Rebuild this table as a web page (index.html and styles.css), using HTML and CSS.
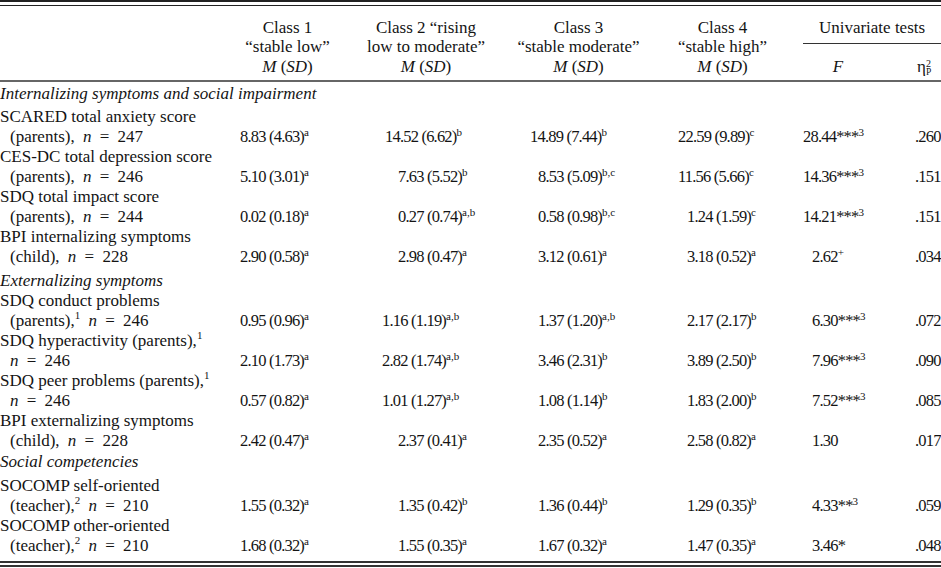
FILE: index.html
```html
<!DOCTYPE html>
<html lang="en">
<head>
<meta charset="utf-8">
<title>Table</title>
<link rel="stylesheet" href="styles.css">
</head>
<body>
<div class="tbl">
<div class="inner">
<table>
  <colgroup>
    <col class="w-lab"><col class="w-c1"><col class="w-c2"><col class="w-c3"><col class="w-c4"><col class="w-f"><col class="w-e">
  </colgroup>
  <thead>
    <tr>
      <th></th>
      <th>Class 1<br>“stable low”<br><i>M</i> (<i>SD</i>)</th>
      <th>Class 2 “rising<br>low to moderate”<br><i>M</i> (<i>SD</i>)</th>
      <th>Class 3<br>“stable moderate”<br><i>M</i> (<i>SD</i>)</th>
      <th>Class 4<br>“stable high”<br><i>M</i> (<i>SD</i>)</th>
      <th colspan="2" class="uv-cell">
        <div class="uv">Univariate tests</div>
        <div class="uv-sub"><span class="hf"><i>F</i></span><span class="he">η<span class="ss"><span class="s2">2</span><span class="p">P</span></span></span></div>
      </th>
    </tr>
  </thead>
  <tbody>
    <tr class="sec s1"><td colspan="7">Internalizing symptoms and social impairment</td></tr>
    <tr>
      <td class="lab"><div>SCARED total anxiety score</div><div class="cont">(parents), <i>n</i> = 247</div></td>
      <td class="num c1">8.83 (4.63)<sup>a</sup></td>
      <td class="num c2 i13">14.52 (6.62)<sup>b</sup></td>
      <td class="num c3 i8">14.89 (7.44)<sup>b</sup></td>
      <td class="num c4 i9">22.59 (9.89)<sup>c</sup></td>
      <td class="num cf i9">28.44***<sup>3</sup></td>
      <td class="num ce">.260</td>
    </tr>
    <tr>
      <td class="lab"><div>CES-DC total depression score</div><div class="cont">(parents), <i>n</i> = 246</div></td>
      <td class="num c1">5.10 (3.01)<sup>a</sup></td>
      <td class="num c2">7.63 (5.52)<sup>b</sup></td>
      <td class="num c3">8.53 (5.09)<sup>b,c</sup></td>
      <td class="num c4 i9">11.56 (5.66)<sup>c</sup></td>
      <td class="num cf i9">14.36***<sup>3</sup></td>
      <td class="num ce">.151</td>
    </tr>
    <tr>
      <td class="lab"><div>SDQ total impact score</div><div class="cont">(parents), <i>n</i> = 244</div></td>
      <td class="num c1">0.02 (0.18)<sup>a</sup></td>
      <td class="num c2">0.27 (0.74)<sup>a,b</sup></td>
      <td class="num c3">0.58 (0.98)<sup>b,c</sup></td>
      <td class="num c4">1.24 (1.59)<sup>c</sup></td>
      <td class="num cf i9">14.21***<sup>3</sup></td>
      <td class="num ce">.151</td>
    </tr>
    <tr>
      <td class="lab"><div>BPI internalizing symptoms</div><div class="cont">(child), <i>n</i> = 228</div></td>
      <td class="num c1">2.90 (0.58)<sup>a</sup></td>
      <td class="num c2">2.98 (0.47)<sup>a</sup></td>
      <td class="num c3">3.12 (0.61)<sup>a</sup></td>
      <td class="num c4">3.18 (0.52)<sup>a</sup></td>
      <td class="num cf">2.62<sup>+</sup></td>
      <td class="num ce">.034</td>
    </tr>
    <tr class="sec s2"><td colspan="7">Externalizing symptoms</td></tr>
    <tr>
      <td class="lab"><div>SDQ conduct problems</div><div class="cont">(parents),<sup>1</sup> <i>n</i> = 246</div></td>
      <td class="num c1">0.95 (0.96)<sup>a</sup></td>
      <td class="num c2 i16">1.16 (1.19)<sup>a,b</sup></td>
      <td class="num c3">1.37 (1.20)<sup>a,b</sup></td>
      <td class="num c4">2.17 (2.17)<sup>b</sup></td>
      <td class="num cf">6.30***<sup>3</sup></td>
      <td class="num ce">.072</td>
    </tr>
    <tr>
      <td class="lab"><div>SDQ hyperactivity (parents),<sup>1</sup></div><div class="cont"><i>n</i> = 246</div></td>
      <td class="num c1">2.10 (1.73)<sup>a</sup></td>
      <td class="num c2 i16">2.82 (1.74)<sup>a,b</sup></td>
      <td class="num c3">3.46 (2.31)<sup>b</sup></td>
      <td class="num c4">3.89 (2.50)<sup>b</sup></td>
      <td class="num cf">7.96***<sup>3</sup></td>
      <td class="num ce">.090</td>
    </tr>
    <tr>
      <td class="lab"><div>SDQ peer problems (parents),<sup>1</sup></div><div class="cont"><i>n</i> = 246</div></td>
      <td class="num c1">0.57 (0.82)<sup>a</sup></td>
      <td class="num c2 i16">1.01 (1.27)<sup>a,b</sup></td>
      <td class="num c3">1.08 (1.14)<sup>b</sup></td>
      <td class="num c4">1.83 (2.00)<sup>b</sup></td>
      <td class="num cf">7.52***<sup>3</sup></td>
      <td class="num ce">.085</td>
    </tr>
    <tr>
      <td class="lab"><div>BPI externalizing symptoms</div><div class="cont">(child), <i>n</i> = 228</div></td>
      <td class="num c1">2.42 (0.47)<sup>a</sup></td>
      <td class="num c2">2.37 (0.41)<sup>a</sup></td>
      <td class="num c3">2.35 (0.52)<sup>a</sup></td>
      <td class="num c4">2.58 (0.82)<sup>a</sup></td>
      <td class="num cf">1.30</td>
      <td class="num ce">.017</td>
    </tr>
    <tr class="sec s3"><td colspan="7">Social competencies</td></tr>
    <tr>
      <td class="lab"><div>SOCOMP self-oriented</div><div class="cont">(teacher),<sup>2</sup> <i>n</i> = 210</div></td>
      <td class="num c1">1.55 (0.32)<sup>a</sup></td>
      <td class="num c2">1.35 (0.42)<sup>b</sup></td>
      <td class="num c3">1.36 (0.44)<sup>b</sup></td>
      <td class="num c4">1.29 (0.35)<sup>b</sup></td>
      <td class="num cf">4.33**<sup>3</sup></td>
      <td class="num ce">.059</td>
    </tr>
    <tr class="last">
      <td class="lab"><div>SOCOMP other-oriented</div><div class="cont">(teacher),<sup>2</sup> <i>n</i> = 210</div></td>
      <td class="num c1">1.68 (0.32)<sup>a</sup></td>
      <td class="num c2">1.55 (0.35)<sup>a</sup></td>
      <td class="num c3">1.67 (0.32)<sup>a</sup></td>
      <td class="num c4">1.47 (0.35)<sup>a</sup></td>
      <td class="num cf">3.46*</td>
      <td class="num ce">.048</td>
    </tr>
  </tbody>
</table>
</div>
</div>
</body>
</html>
```

FILE: styles.css
```css
* { box-sizing: border-box; }
html, body { margin: 0; padding: 0; background: #ffffff; }
body {
  width: 941px;
  font-family: "Liberation Serif", "Times New Roman", serif;
  font-size: 17px;
  color: #141414;
}
.tbl {
  border-top: 2px solid #222222;
  border-bottom: 2px solid #333333;
  padding: 3px 0 2px;
}
.inner {
  border-top: 1px solid #222222;
  border-bottom: 2px solid #333333;
}
table {
  width: 941px;
  border-collapse: collapse;
  table-layout: fixed;
}
.w-lab { width: 225px; }
.w-c1 { width: 125px; }
.w-c2 { width: 152px; }
.w-c3 { width: 153px; }
.w-c4 { width: 135px; }
.w-f { width: 96px; }
.w-e { width: 55px; }

thead tr { border-bottom: 2px solid #666666; }
th {
  font-weight: normal;
  text-align: center;
  line-height: 19.5px;
  padding: 11.5px 0 3.5px;
  white-space: nowrap;
  vertical-align: top;
}
.uv {
  margin-left: 13px;
  padding-bottom: 6px;
  border-bottom: 1px solid #333333;
}
.uv-sub {
  display: grid;
  grid-template-columns: 96px 55px;
  margin-top: 12.5px;
  height: 19.5px;
}
.hf { text-align: center; }
.he { text-align: left; padding-left: 31px; white-space: nowrap; }
.ss {
  display: inline-block;
  vertical-align: -3px;
  font-size: 10px;
  line-height: 9px;
}
.ss span { display: block; }
.ss .p { font-size: 9.5px; }

td {
  padding: 0;
  line-height: 20px;
  white-space: nowrap;
  text-align: left;
}
.sec td { font-style: italic; }
.s1 td { padding: 2.5px 0 3px; }
.s2 td { padding: 4px 0 0; }
.s3 td { padding: 1px 0 4px; }
.last td { padding-bottom: 5px; }

.lab { vertical-align: top; }
.cont { padding-left: 10px; word-spacing: 4px; }

.num {
  vertical-align: bottom;
  font-size: 16.5px;
  letter-spacing: -0.8px;
}
.c1 { padding-left: 15px; }
.c2 { padding-left: 48px; }
.c3 { padding-left: 36px; }
.c4 { padding-left: 32px; }
.cf { padding-left: 22px; }
.ce { padding-left: 29px; }
.i8 { text-indent: -8px; }
.i9 { text-indent: -9px; }
.i13 { text-indent: -13px; }
.i16 { text-indent: -16px; }

sup {
  font-size: 11px;
  line-height: 0;
  vertical-align: 6px;
  letter-spacing: 0;
}
.lab sup { font-size: 11px; vertical-align: 7px; }
```
